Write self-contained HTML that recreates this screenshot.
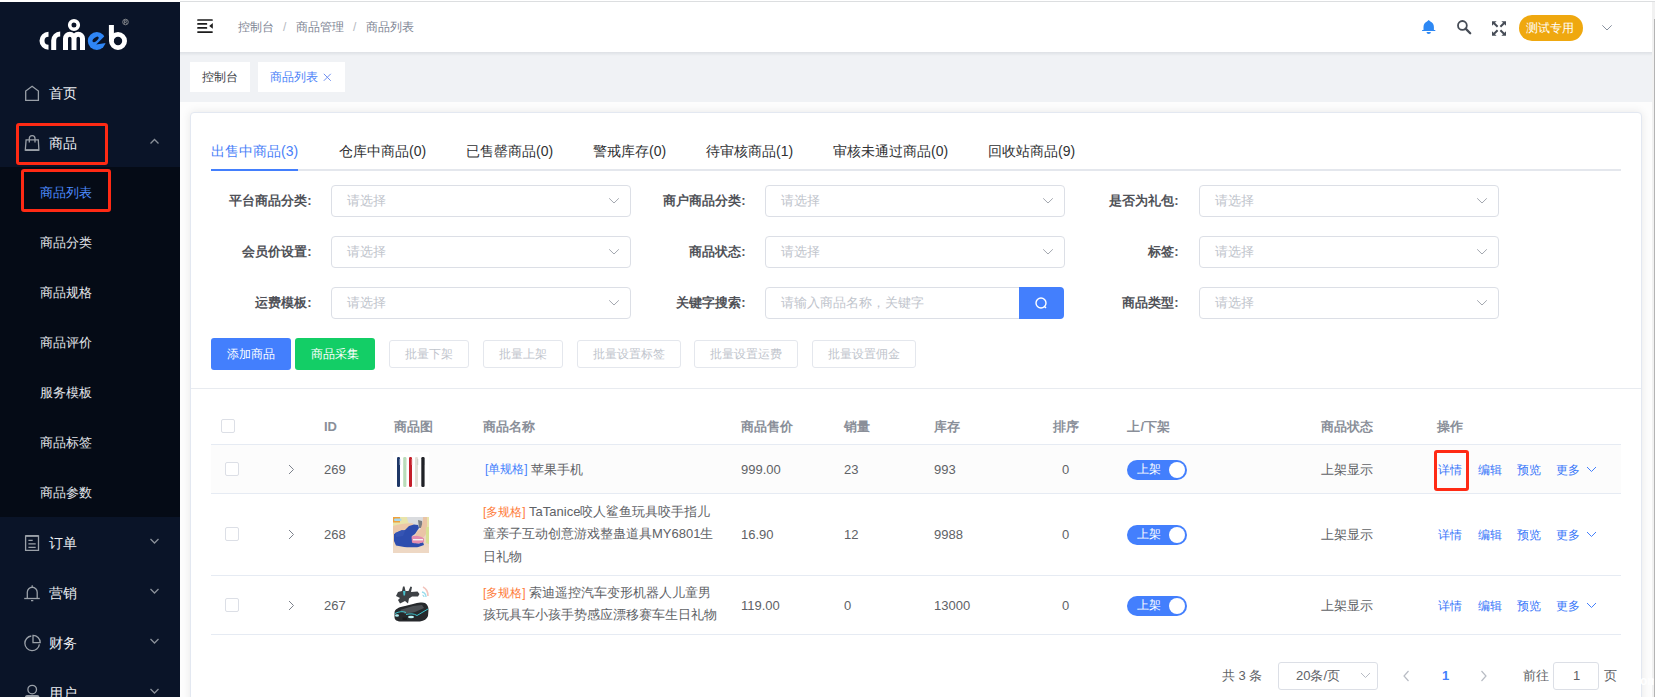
<!DOCTYPE html>
<html><head><meta charset="utf-8">
<style>
*{box-sizing:border-box;margin:0;padding:0}
html,body{width:1655px;height:697px;overflow:hidden}
body{position:relative;background:#fff;font-family:"Liberation Sans",sans-serif;font-size:13px;color:#606266}
.a{position:absolute}
.t{position:absolute;white-space:nowrap;line-height:1}
/* sidebar */
#side{left:0;top:2px;width:180px;height:695px;background:#0a1428}
#sub{left:0;top:167px;width:180px;height:350px;background:#050b16}
.mi{color:#eceef2;font-size:14px}
.si{color:#e2e5ea;font-size:13px}
.ic{position:absolute;fill:none;stroke:#9aa0a8;stroke-width:1.3}
.red{position:absolute;border:3px solid #ff2a14;border-radius:3px}
/* header */
#topline{left:180px;top:1px;width:1475px;height:1px;background:#dcdee0}
#hdr{left:180px;top:2px;width:1472px;height:50px;background:#fff}
#tagbar{left:180px;top:52px;width:1472px;height:50px;background:#f0f2f5}
#main{left:180px;top:102px;width:1472px;height:595px;background:#fdfdfd}
#scroll{left:1652px;top:2px;width:3px;height:695px;background:#f1f1f1}
#thumb{left:1654px;top:19px;width:1px;height:678px;background:#b4b4b4;z-index:2}
.tag{position:absolute;top:62px;height:30px;background:#fff}
.c{font-style:normal;display:inline-block;width:1em}
</style></head><body>
<div class="a" id="topline"></div>
<div class="a" id="side"></div>
<div class="a" id="sub"></div>
<div class="a" id="hdr"></div>
<div class="a" id="tagbar"></div>
<div class="a" id="main"></div>
<div class="a" style="left:180px;top:52px;width:1472px;height:4px;background:linear-gradient(rgba(0,21,41,.08),rgba(0,21,41,0))"></div>
<div class="a" id="scroll"></div>
<div class="a" id="thumb"></div>

<svg class="a" style="left:0;top:0" width="180" height="67" viewBox="0 0 180 67">
 <g fill="none" stroke="#fff" stroke-width="5">
  <path d="M48.5,34.25 A6.5,6.5 0 0 0 48.5,47.25"/>
  <path d="M53.7,50 V40.5 A6.5,6.5 0 0 1 60.2,34"/>
  <path d="M65.5,50 V38.5 A4.25,4.25 0 0 1 74,38.5 V50 M74,38.5 A4.25,4.25 0 0 1 82.5,38.5 V50"/>
  <circle cx="74" cy="25" r="4.3" stroke-width="3.6"/>
  <path d="M111.4,25 V41"/>
  <circle cx="118" cy="41" r="6.6" stroke-width="4.8"/>
 </g>
 <circle cx="96.8" cy="41" r="9" fill="#2f86f6"/>
 <ellipse cx="95.6" cy="39.4" rx="3.7" ry="1.7" transform="rotate(-40 95.6 39.4)" fill="#0a1428"/>
 <path d="M96.2,44.6 L105.2,35.6 L109,35.6 L109,42.6 Z" fill="#0a1428"/>
 <circle cx="125.5" cy="22" r="2.8" fill="none" stroke="#aaa" stroke-width="0.7"/>
 <path d="M124.5,23.8 V20.3 H126 A1,1 0 0 1 126,22.2 H124.5 M125.6,22.2 L126.8,23.8" fill="none" stroke="#aaa" stroke-width="0.6"/>
</svg>
<svg class="ic" style="left:0;top:0" width="180" height="697" viewBox="0 0 180 697">
 <path d="M25.7,100.3 V91 L32.1,86.3 L38.4,91 V100.3 Z"/>
 <path d="M29.3,142.5 V138.4 A2.85,2.85 0 0 1 35,138.4 V142.5"/>
 <path d="M26.1,139.9 H38.3 L38.9,150 H25.3 Z"/>
 <path d="M25.3,150.2 H38.9" stroke-width="1.6"/>
 <path d="M150.5,143.5 L154.5,139.5 L158.5,143.5" stroke="#8a9099"/>
 <path d="M25.6,535.8 H38.5 V550.3 H25.6 Z"/>
 <path d="M25.6,535.9 H38.5" stroke-width="1.8"/>
 <path d="M28.4,540.4 H32.7 M28.4,543.9 H35.7 M28.4,547.3 H35.7"/>
 <path d="M24.2,598.5 H39.8"/>
 <path d="M27.3,598.5 V592.2 A4.95,4.95 0 0 1 37.2,592.2 V598.5"/>
 <path d="M32.2,585.2 V587.3 M31,600.6 H33.3" stroke-width="1.2"/>
 <path d="M31.3,636 A7.3,7.3 0 1 0 39.4,644.3"/>
 <path d="M33,635.4 V642.6 H40.2 A7.2,7.2 0 0 0 33,635.4 Z"/>
 <circle cx="32.2" cy="689.6" r="4.3" stroke-width="1.3"/>
 <path d="M25,697 C25,694.5 28,695 32.2,695 C36.4,695 39.4,694.5 39.4,697 Z" fill="#9aa0a8" stroke="none"/>
 <path d="M150.5,539 L154.5,543 L158.5,539 M150.5,589 L154.5,593 L158.5,589 M150.5,639 L154.5,643 L158.5,639 M150.5,689 L154.5,693 L158.5,689" stroke="#8a9099"/>
</svg>
<div class="t mi" style="left:49px;top:86px"><i class="c">首</i><i class="c">页</i></div>
<div class="t mi" style="left:49px;top:136px"><i class="c">商</i><i class="c">品</i></div>
<div class="red" style="left:16px;top:123px;width:92px;height:42px"></div>
<div class="t si" style="left:40px;top:186px;color:#4d8bff"><i class="c">商</i><i class="c">品</i><i class="c">列</i><i class="c">表</i></div>
<div class="red" style="left:21px;top:169px;width:90px;height:43px"></div>
<div class="t si" style="left:40px;top:236px"><i class="c">商</i><i class="c">品</i><i class="c">分</i><i class="c">类</i></div>
<div class="t si" style="left:40px;top:286px"><i class="c">商</i><i class="c">品</i><i class="c">规</i><i class="c">格</i></div>
<div class="t si" style="left:40px;top:336px"><i class="c">商</i><i class="c">品</i><i class="c">评</i><i class="c">价</i></div>
<div class="t si" style="left:40px;top:386px"><i class="c">服</i><i class="c">务</i><i class="c">模</i><i class="c">板</i></div>
<div class="t si" style="left:40px;top:436px"><i class="c">商</i><i class="c">品</i><i class="c">标</i><i class="c">签</i></div>
<div class="t si" style="left:40px;top:486px"><i class="c">商</i><i class="c">品</i><i class="c">参</i><i class="c">数</i></div>
<div class="t mi" style="left:49px;top:536px"><i class="c">订</i><i class="c">单</i></div>
<div class="t mi" style="left:49px;top:586px"><i class="c">营</i><i class="c">销</i></div>
<div class="t mi" style="left:49px;top:636px"><i class="c">财</i><i class="c">务</i></div>
<div class="t mi" style="left:49px;top:686px"><i class="c">用</i><i class="c">户</i></div>


<svg class="a" style="left:0;top:0" width="1655" height="52" viewBox="0 0 1655 52">
 <g fill="#1c1c1c">
  <rect x="197.2" y="19.2" width="15.6" height="1.6" rx="0.6"/>
  <rect x="197.2" y="23.1" width="10" height="1.7" rx="0.6"/>
  <rect x="197.2" y="27.1" width="10" height="1.7" rx="0.6"/>
  <rect x="197.2" y="31.2" width="15.6" height="1.7" rx="0.6"/>
  <path d="M212.8,23.1 V28.8 L209.2,26 Z"/>
 </g>
 <path d="M1428.7,20 L1430.4,21.5 C1432.8,22.4 1433.9,24.6 1433.9,27 V30 H1435.3 V31.1 H1422.1 V30 H1423.5 V27 C1423.5,24.6 1424.6,22.4 1427,21.5 Z M1426.5,32 H1430.9 A2.2,1.9 0 0 1 1426.5,32 Z" fill="#2d88f4"/>
 <circle cx="1462.4" cy="25.4" r="4.4" fill="none" stroke="#464c56" stroke-width="1.8"/>
 <path d="M1465.6,28.6 L1470.2,33.2" stroke="#464c56" stroke-width="2.3" stroke-linecap="round"/>
 <g fill="#464c56" stroke="#464c56" stroke-width="2">
  <path d="M1492,21.2 L1496.6,21.2 L1492,25.8 Z" stroke="none"/>
  <path d="M1506,21.2 L1501.4,21.2 L1506,25.8 Z" stroke="none"/>
  <path d="M1492,35.8 L1496.6,35.8 L1492,31.2 Z" stroke="none"/>
  <path d="M1506,35.8 L1501.4,35.8 L1506,31.2 Z" stroke="none"/>
  <path d="M1493.8,23 L1497.6,26.8 M1504.2,23 L1500.4,26.8 M1493.8,34 L1497.6,30.2 M1504.2,34 L1500.4,30.2" fill="none"/>
 </g>
 <path d="M1602.3,25.3 L1607,30 L1611.7,25.3" fill="none" stroke="#7a8494" stroke-width="0.9"/>
</svg>
<div class="t" style="left:238px;top:21px;font-size:12px;color:#808695"><i class="c">控</i><i class="c">制</i><i class="c">台</i></div>
<div class="t" style="left:283px;top:21px;font-size:12px;color:#b4b8c0">/</div>
<div class="t" style="left:296px;top:21px;font-size:12px;color:#808695"><i class="c">商</i><i class="c">品</i><i class="c">管</i><i class="c">理</i></div>
<div class="t" style="left:353px;top:21px;font-size:12px;color:#b4b8c0">/</div>
<div class="t" style="left:366px;top:21px;font-size:12px;color:#808695"><i class="c">商</i><i class="c">品</i><i class="c">列</i><i class="c">表</i></div>
<div class="a" style="left:1519px;top:15px;width:64px;height:26px;border-radius:13px;background:#efa80f"></div>
<div class="t" style="left:1526px;top:22px;font-size:12px;color:#fff"><i class="c">测</i><i class="c">试</i><i class="c">专</i><i class="c">用</i></div>
<div class="tag" style="left:190px;width:60px"></div>
<div class="t" style="left:202px;top:71px;font-size:12px;color:#3a3d44"><i class="c">控</i><i class="c">制</i><i class="c">台</i></div>
<div class="tag" style="left:258px;width:87px"></div>
<div class="t" style="left:270px;top:71px;font-size:12px;color:#4a7ff8"><i class="c">商</i><i class="c">品</i><i class="c">列</i><i class="c">表</i></div>
<svg class="a" style="left:322px;top:73px" width="11" height="9" viewBox="0 0 11 9"><path d="M1.8,0.8 L8.8,7.8 M8.8,0.8 L1.8,7.8" stroke="#6f8ff0" stroke-width="1"/></svg>

<div class="a" style="left:190px;top:112px;width:1452px;height:620px;background:#fff;border:1px solid #e3e8f1;border-radius:4px;box-shadow:0 0 10px rgba(0,0,0,.09)"></div>
<div class="t" style="left:211px;top:144px;font-size:14px;color:#4a7ff8"><i class="c">出</i><i class="c">售</i><i class="c">中</i><i class="c">商</i><i class="c">品</i>(3)</div>
<div class="t" style="left:339px;top:144px;font-size:14px;color:#303133"><i class="c">仓</i><i class="c">库</i><i class="c">中</i><i class="c">商</i><i class="c">品</i>(0)</div>
<div class="t" style="left:466px;top:144px;font-size:14px;color:#303133"><i class="c">已</i><i class="c">售</i><i class="c">罄</i><i class="c">商</i><i class="c">品</i>(0)</div>
<div class="t" style="left:593px;top:144px;font-size:14px;color:#303133"><i class="c">警</i><i class="c">戒</i><i class="c">库</i><i class="c">存</i>(0)</div>
<div class="t" style="left:706px;top:144px;font-size:14px;color:#303133"><i class="c">待</i><i class="c">审</i><i class="c">核</i><i class="c">商</i><i class="c">品</i>(1)</div>
<div class="t" style="left:833px;top:144px;font-size:14px;color:#303133"><i class="c">审</i><i class="c">核</i><i class="c">未</i><i class="c">通</i><i class="c">过</i><i class="c">商</i><i class="c">品</i>(0)</div>
<div class="t" style="left:988px;top:144px;font-size:14px;color:#303133"><i class="c">回</i><i class="c">收</i><i class="c">站</i><i class="c">商</i><i class="c">品</i>(9)</div>
<div class="a" style="left:211px;top:169px;width:1410px;height:2px;background:#e4e7ed"></div>
<div class="a" style="left:211px;top:169px;width:87px;height:2px;background:#437ffd"></div>
<div class="t" style="right:1343.4px;top:194px;font-size:13px;font-weight:bold;color:#505258"><i class="c">平</i><i class="c">台</i><i class="c">商</i><i class="c">品</i><i class="c">分</i><i class="c">类</i>:</div>
<div class="a" style="left:331px;top:185px;width:300px;height:32px;border:1px solid #dcdfe6;border-radius:4px"></div>
<div class="t" style="left:347px;top:194px;font-size:13px;color:#c0c4cc"><i class="c">请</i><i class="c">选</i><i class="c">择</i></div>
<svg class="a" style="left:608px;top:197px" width="12" height="8" viewBox="0 0 12 8"><path d="M1.2,1.3 L6,6 L10.8,1.3" fill="none" stroke="#a4a8b0" stroke-width="1"/></svg>
<div class="t" style="right:909.5px;top:194px;font-size:13px;font-weight:bold;color:#505258"><i class="c">商</i><i class="c">户</i><i class="c">商</i><i class="c">品</i><i class="c">分</i><i class="c">类</i>:</div>
<div class="a" style="left:765px;top:185px;width:300px;height:32px;border:1px solid #dcdfe6;border-radius:4px"></div>
<div class="t" style="left:781px;top:194px;font-size:13px;color:#c0c4cc"><i class="c">请</i><i class="c">选</i><i class="c">择</i></div>
<svg class="a" style="left:1042px;top:197px" width="12" height="8" viewBox="0 0 12 8"><path d="M1.2,1.3 L6,6 L10.8,1.3" fill="none" stroke="#a4a8b0" stroke-width="1"/></svg>
<div class="t" style="right:476.29999999999995px;top:194px;font-size:13px;font-weight:bold;color:#505258"><i class="c">是</i><i class="c">否</i><i class="c">为</i><i class="c">礼</i><i class="c">包</i>:</div>
<div class="a" style="left:1199px;top:185px;width:300px;height:32px;border:1px solid #dcdfe6;border-radius:4px"></div>
<div class="t" style="left:1215px;top:194px;font-size:13px;color:#c0c4cc"><i class="c">请</i><i class="c">选</i><i class="c">择</i></div>
<svg class="a" style="left:1476px;top:197px" width="12" height="8" viewBox="0 0 12 8"><path d="M1.2,1.3 L6,6 L10.8,1.3" fill="none" stroke="#a4a8b0" stroke-width="1"/></svg>
<div class="t" style="right:1343.4px;top:245px;font-size:13px;font-weight:bold;color:#505258"><i class="c">会</i><i class="c">员</i><i class="c">价</i><i class="c">设</i><i class="c">置</i>:</div>
<div class="a" style="left:331px;top:236px;width:300px;height:32px;border:1px solid #dcdfe6;border-radius:4px"></div>
<div class="t" style="left:347px;top:245px;font-size:13px;color:#c0c4cc"><i class="c">请</i><i class="c">选</i><i class="c">择</i></div>
<svg class="a" style="left:608px;top:248px" width="12" height="8" viewBox="0 0 12 8"><path d="M1.2,1.3 L6,6 L10.8,1.3" fill="none" stroke="#a4a8b0" stroke-width="1"/></svg>
<div class="t" style="right:909.5px;top:245px;font-size:13px;font-weight:bold;color:#505258"><i class="c">商</i><i class="c">品</i><i class="c">状</i><i class="c">态</i>:</div>
<div class="a" style="left:765px;top:236px;width:300px;height:32px;border:1px solid #dcdfe6;border-radius:4px"></div>
<div class="t" style="left:781px;top:245px;font-size:13px;color:#c0c4cc"><i class="c">请</i><i class="c">选</i><i class="c">择</i></div>
<svg class="a" style="left:1042px;top:248px" width="12" height="8" viewBox="0 0 12 8"><path d="M1.2,1.3 L6,6 L10.8,1.3" fill="none" stroke="#a4a8b0" stroke-width="1"/></svg>
<div class="t" style="right:476.29999999999995px;top:245px;font-size:13px;font-weight:bold;color:#505258"><i class="c">标</i><i class="c">签</i>:</div>
<div class="a" style="left:1199px;top:236px;width:300px;height:32px;border:1px solid #dcdfe6;border-radius:4px"></div>
<div class="t" style="left:1215px;top:245px;font-size:13px;color:#c0c4cc"><i class="c">请</i><i class="c">选</i><i class="c">择</i></div>
<svg class="a" style="left:1476px;top:248px" width="12" height="8" viewBox="0 0 12 8"><path d="M1.2,1.3 L6,6 L10.8,1.3" fill="none" stroke="#a4a8b0" stroke-width="1"/></svg>
<div class="t" style="right:1343.4px;top:296px;font-size:13px;font-weight:bold;color:#505258"><i class="c">运</i><i class="c">费</i><i class="c">模</i><i class="c">板</i>:</div>
<div class="a" style="left:331px;top:287px;width:300px;height:32px;border:1px solid #dcdfe6;border-radius:4px"></div>
<div class="t" style="left:347px;top:296px;font-size:13px;color:#c0c4cc"><i class="c">请</i><i class="c">选</i><i class="c">择</i></div>
<svg class="a" style="left:608px;top:299px" width="12" height="8" viewBox="0 0 12 8"><path d="M1.2,1.3 L6,6 L10.8,1.3" fill="none" stroke="#a4a8b0" stroke-width="1"/></svg>
<div class="t" style="right:909.5px;top:296px;font-size:13px;font-weight:bold;color:#505258"><i class="c">关</i><i class="c">键</i><i class="c">字</i><i class="c">搜</i><i class="c">索</i>:</div>
<div class="a" style="left:765px;top:287px;width:260px;height:32px;border:1px solid #dcdfe6;border-radius:4px 0 0 4px"></div>
<div class="t" style="left:781px;top:296px;font-size:13px;color:#c0c4cc"><i class="c">请</i><i class="c">输</i><i class="c">入</i><i class="c">商</i><i class="c">品</i><i class="c">名</i><i class="c">称</i><i class="c">，</i><i class="c">关</i><i class="c">键</i><i class="c">字</i></div>
<div class="a" style="left:1019px;top:287px;width:45px;height:32px;background:#437ffd;border-radius:0 4px 4px 0"></div>
<svg class="a" style="left:1033px;top:295px" width="16" height="16" viewBox="0 0 16 16"><circle cx="8" cy="8" r="5" fill="none" stroke="#fff" stroke-width="1.4"/><path d="M11.3,11.3 L13,13" stroke="#fff" stroke-width="1.4"/></svg>
<div class="t" style="right:476.29999999999995px;top:296px;font-size:13px;font-weight:bold;color:#505258"><i class="c">商</i><i class="c">品</i><i class="c">类</i><i class="c">型</i>:</div>
<div class="a" style="left:1199px;top:287px;width:300px;height:32px;border:1px solid #dcdfe6;border-radius:4px"></div>
<div class="t" style="left:1215px;top:296px;font-size:13px;color:#c0c4cc"><i class="c">请</i><i class="c">选</i><i class="c">择</i></div>
<svg class="a" style="left:1476px;top:299px" width="12" height="8" viewBox="0 0 12 8"><path d="M1.2,1.3 L6,6 L10.8,1.3" fill="none" stroke="#a4a8b0" stroke-width="1"/></svg>
<div class="a" style="left:211px;top:338px;width:80px;height:32px;background:#437ffd;border-radius:3px;color:#fff;font-size:12px;line-height:32px;text-align:center"><i class="c">添</i><i class="c">加</i><i class="c">商</i><i class="c">品</i></div>
<div class="a" style="left:295px;top:338px;width:80px;height:32px;background:#13ce66;border-radius:3px;color:#fff;font-size:12px;line-height:32px;text-align:center"><i class="c">商</i><i class="c">品</i><i class="c">采</i><i class="c">集</i></div>
<div class="a" style="left:389px;top:340px;width:80px;height:28px;border:1px solid #e4e7ed;border-radius:3px;color:#c0c4cc;font-size:12px;line-height:26px;text-align:center"><i class="c">批</i><i class="c">量</i><i class="c">下</i><i class="c">架</i></div>
<div class="a" style="left:483px;top:340px;width:80px;height:28px;border:1px solid #e4e7ed;border-radius:3px;color:#c0c4cc;font-size:12px;line-height:26px;text-align:center"><i class="c">批</i><i class="c">量</i><i class="c">上</i><i class="c">架</i></div>
<div class="a" style="left:577px;top:340px;width:104px;height:28px;border:1px solid #e4e7ed;border-radius:3px;color:#c0c4cc;font-size:12px;line-height:26px;text-align:center"><i class="c">批</i><i class="c">量</i><i class="c">设</i><i class="c">置</i><i class="c">标</i><i class="c">签</i></div>
<div class="a" style="left:694px;top:340px;width:104px;height:28px;border:1px solid #e4e7ed;border-radius:3px;color:#c0c4cc;font-size:12px;line-height:26px;text-align:center"><i class="c">批</i><i class="c">量</i><i class="c">设</i><i class="c">置</i><i class="c">运</i><i class="c">费</i></div>
<div class="a" style="left:812px;top:340px;width:104px;height:28px;border:1px solid #e4e7ed;border-radius:3px;color:#c0c4cc;font-size:12px;line-height:26px;text-align:center"><i class="c">批</i><i class="c">量</i><i class="c">设</i><i class="c">置</i><i class="c">佣</i><i class="c">金</i></div>
<div class="a" style="left:191px;top:388px;width:1450px;height:1px;background:#e8ebf0"></div>
<div class="a" style="left:221px;top:419px;width:14px;height:14px;border:1px solid #dcdfe6;border-radius:2px;background:#fff"></div>
<div class="t" style="left:324px;top:420px;font-size:13px;font-weight:bold;color:#8a8f99">ID</div>
<div class="t" style="left:393.5px;top:420px;font-size:13px;font-weight:bold;color:#8a8f99"><i class="c">商</i><i class="c">品</i><i class="c">图</i></div>
<div class="t" style="left:483px;top:420px;font-size:13px;font-weight:bold;color:#8a8f99"><i class="c">商</i><i class="c">品</i><i class="c">名</i><i class="c">称</i></div>
<div class="t" style="left:741px;top:420px;font-size:13px;font-weight:bold;color:#8a8f99"><i class="c">商</i><i class="c">品</i><i class="c">售</i><i class="c">价</i></div>
<div class="t" style="left:844px;top:420px;font-size:13px;font-weight:bold;color:#8a8f99"><i class="c">销</i><i class="c">量</i></div>
<div class="t" style="left:934px;top:420px;font-size:13px;font-weight:bold;color:#8a8f99"><i class="c">库</i><i class="c">存</i></div>
<div class="t" style="left:1052.7px;top:420px;font-size:13px;font-weight:bold;color:#8a8f99"><i class="c">排</i><i class="c">序</i></div>
<div class="t" style="left:1127.4px;top:420px;font-size:13px;font-weight:bold;color:#8a8f99"><i class="c">上</i>/<i class="c">下</i><i class="c">架</i></div>
<div class="t" style="left:1321px;top:420px;font-size:13px;font-weight:bold;color:#8a8f99"><i class="c">商</i><i class="c">品</i><i class="c">状</i><i class="c">态</i></div>
<div class="t" style="left:1437px;top:420px;font-size:13px;font-weight:bold;color:#8a8f99"><i class="c">操</i><i class="c">作</i></div>
<div class="a" style="left:211px;top:444px;width:1410px;height:1px;background:#e6ebf3"></div>
<div class="a" style="left:211px;top:445px;width:1410px;height:48px;background:#fcfcfc"></div>
<div class="a" style="left:211px;top:493px;width:1410px;height:1px;background:#e6ebf3"></div>
<div class="a" style="left:211px;top:575px;width:1410px;height:1px;background:#e6ebf3"></div>
<div class="a" style="left:211px;top:634px;width:1410px;height:1px;background:#e6ebf3"></div>
<div class="a" style="left:225px;top:462px;width:14px;height:14px;border:1px solid #dcdfe6;border-radius:2px;background:#fff"></div>
<svg class="a" style="left:286px;top:464px" width="10" height="11" viewBox="0 0 10 11"><path d="M3,1 L7.5,5.5 L3,10" fill="none" stroke="#7d828c" stroke-width="1"/></svg>
<div class="t" style="left:324px;top:463px;font-size:13px;color:#606266">269</div>
<div class="t" style="left:741px;top:463px;font-size:13px;color:#606266">999.00</div>
<div class="t" style="left:844px;top:463px;font-size:13px;color:#606266">23</div>
<div class="t" style="left:934px;top:463px;font-size:13px;color:#606266">993</div>
<div class="t" style="left:1062px;top:463px;font-size:13px;color:#606266">0</div>
<div class="a" style="left:1127px;top:460px;width:60px;height:20px;border-radius:10px;background:#437ffd"></div>
<div class="a" style="left:1169px;top:462px;width:16px;height:16px;border-radius:8px;background:#fff"></div>
<div class="t" style="left:1137px;top:463px;font-size:12px;color:#fff"><i class="c">上</i><i class="c">架</i></div>
<div class="t" style="left:1321px;top:463px;font-size:13px;color:#606266"><i class="c">上</i><i class="c">架</i><i class="c">显</i><i class="c">示</i></div>
<div class="t" style="left:1438px;top:464px;font-size:12px;color:#3776f9"><i class="c">详</i><i class="c">情</i></div>
<div class="t" style="left:1477.5px;top:464px;font-size:12px;color:#3776f9"><i class="c">编</i><i class="c">辑</i></div>
<div class="t" style="left:1517px;top:464px;font-size:12px;color:#3776f9"><i class="c">预</i><i class="c">览</i></div>
<div class="t" style="left:1556px;top:464px;font-size:12px;color:#3776f9"><i class="c">更</i><i class="c">多</i></div>
<svg class="a" style="left:1586px;top:466px" width="11" height="7" viewBox="0 0 11 7"><path d="M1,1 L5.5,5.5 L10,1" fill="none" stroke="#437ffd" stroke-width="1"/></svg>
<div class="a" style="left:225px;top:527px;width:14px;height:14px;border:1px solid #dcdfe6;border-radius:2px;background:#fff"></div>
<svg class="a" style="left:286px;top:529px" width="10" height="11" viewBox="0 0 10 11"><path d="M3,1 L7.5,5.5 L3,10" fill="none" stroke="#7d828c" stroke-width="1"/></svg>
<div class="t" style="left:324px;top:528px;font-size:13px;color:#606266">268</div>
<div class="t" style="left:741px;top:528px;font-size:13px;color:#606266">16.90</div>
<div class="t" style="left:844px;top:528px;font-size:13px;color:#606266">12</div>
<div class="t" style="left:934px;top:528px;font-size:13px;color:#606266">9988</div>
<div class="t" style="left:1062px;top:528px;font-size:13px;color:#606266">0</div>
<div class="a" style="left:1127px;top:525px;width:60px;height:20px;border-radius:10px;background:#437ffd"></div>
<div class="a" style="left:1169px;top:527px;width:16px;height:16px;border-radius:8px;background:#fff"></div>
<div class="t" style="left:1137px;top:528px;font-size:12px;color:#fff"><i class="c">上</i><i class="c">架</i></div>
<div class="t" style="left:1321px;top:528px;font-size:13px;color:#606266"><i class="c">上</i><i class="c">架</i><i class="c">显</i><i class="c">示</i></div>
<div class="t" style="left:1438px;top:529px;font-size:12px;color:#3776f9"><i class="c">详</i><i class="c">情</i></div>
<div class="t" style="left:1477.5px;top:529px;font-size:12px;color:#3776f9"><i class="c">编</i><i class="c">辑</i></div>
<div class="t" style="left:1517px;top:529px;font-size:12px;color:#3776f9"><i class="c">预</i><i class="c">览</i></div>
<div class="t" style="left:1556px;top:529px;font-size:12px;color:#3776f9"><i class="c">更</i><i class="c">多</i></div>
<svg class="a" style="left:1586px;top:531px" width="11" height="7" viewBox="0 0 11 7"><path d="M1,1 L5.5,5.5 L10,1" fill="none" stroke="#437ffd" stroke-width="1"/></svg>
<div class="a" style="left:225px;top:598px;width:14px;height:14px;border:1px solid #dcdfe6;border-radius:2px;background:#fff"></div>
<svg class="a" style="left:286px;top:600px" width="10" height="11" viewBox="0 0 10 11"><path d="M3,1 L7.5,5.5 L3,10" fill="none" stroke="#7d828c" stroke-width="1"/></svg>
<div class="t" style="left:324px;top:599px;font-size:13px;color:#606266">267</div>
<div class="t" style="left:741px;top:599px;font-size:13px;color:#606266">119.00</div>
<div class="t" style="left:844px;top:599px;font-size:13px;color:#606266">0</div>
<div class="t" style="left:934px;top:599px;font-size:13px;color:#606266">13000</div>
<div class="t" style="left:1062px;top:599px;font-size:13px;color:#606266">0</div>
<div class="a" style="left:1127px;top:596px;width:60px;height:20px;border-radius:10px;background:#437ffd"></div>
<div class="a" style="left:1169px;top:598px;width:16px;height:16px;border-radius:8px;background:#fff"></div>
<div class="t" style="left:1137px;top:599px;font-size:12px;color:#fff"><i class="c">上</i><i class="c">架</i></div>
<div class="t" style="left:1321px;top:599px;font-size:13px;color:#606266"><i class="c">上</i><i class="c">架</i><i class="c">显</i><i class="c">示</i></div>
<div class="t" style="left:1438px;top:600px;font-size:12px;color:#3776f9"><i class="c">详</i><i class="c">情</i></div>
<div class="t" style="left:1477.5px;top:600px;font-size:12px;color:#3776f9"><i class="c">编</i><i class="c">辑</i></div>
<div class="t" style="left:1517px;top:600px;font-size:12px;color:#3776f9"><i class="c">预</i><i class="c">览</i></div>
<div class="t" style="left:1556px;top:600px;font-size:12px;color:#3776f9"><i class="c">更</i><i class="c">多</i></div>
<svg class="a" style="left:1586px;top:602px" width="11" height="7" viewBox="0 0 11 7"><path d="M1,1 L5.5,5.5 L10,1" fill="none" stroke="#437ffd" stroke-width="1"/></svg>
<div class="t" style="left:485px;top:463px;font-size:12px;color:#437ffd">[<i class="c">单</i><i class="c">规</i><i class="c">格</i>]</div>
<div class="t" style="left:531px;top:463px;font-size:13px;color:#606266"><i class="c">苹</i><i class="c">果</i><i class="c">手</i><i class="c">机</i></div>
<div class="a" style="left:483px;top:500.5px;width:260px;white-space:nowrap;font-size:13px;line-height:22.6px;color:#606266"><span style="color:#fe7b3a;font-size:12px">[<i class="c">多</i><i class="c">规</i><i class="c">格</i>]</span> TaTanice<i class="c">咬</i><i class="c">人</i><i class="c">鲨</i><i class="c">鱼</i><i class="c">玩</i><i class="c">具</i><i class="c">咬</i><i class="c">手</i><i class="c">指</i><i class="c">儿</i><br><i class="c">童</i><i class="c">亲</i><i class="c">子</i><i class="c">互</i><i class="c">动</i><i class="c">创</i><i class="c">意</i><i class="c">游</i><i class="c">戏</i><i class="c">整</i><i class="c">蛊</i><i class="c">道</i><i class="c">具</i>MY6801<i class="c">生</i><br><i class="c">日</i><i class="c">礼</i><i class="c">物</i></div>
<div class="a" style="left:483px;top:581.5px;width:260px;white-space:nowrap;font-size:13px;line-height:22.6px;color:#606266"><span style="color:#fe7b3a;font-size:12px">[<i class="c">多</i><i class="c">规</i><i class="c">格</i>]</span> <i class="c">索</i><i class="c">迪</i><i class="c">遥</i><i class="c">控</i><i class="c">汽</i><i class="c">车</i><i class="c">变</i><i class="c">形</i><i class="c">机</i><i class="c">器</i><i class="c">人</i><i class="c">儿</i><i class="c">童</i><i class="c">男</i><br><i class="c">孩</i><i class="c">玩</i><i class="c">具</i><i class="c">车</i><i class="c">小</i><i class="c">孩</i><i class="c">手</i><i class="c">势</i><i class="c">感</i><i class="c">应</i><i class="c">漂</i><i class="c">移</i><i class="c">赛</i><i class="c">车</i><i class="c">生</i><i class="c">日</i><i class="c">礼</i><i class="c">物</i></div>
<div class="red" style="left:1434px;top:450px;width:35px;height:41px"></div>
<svg class="a" style="left:393px;top:452px" width="36" height="36" viewBox="0 0 36 36">
<rect width="36" height="36" fill="#fff"/>
<rect x="4" y="5" width="3" height="30" rx="1.2" fill="#1e3766"/>
<rect x="10.2" y="5" width="3.2" height="30" rx="1.2" fill="#b9dcb9"/>
<rect x="16" y="5" width="3" height="30" rx="1.2" fill="#c41f2a"/>
<rect x="22" y="5" width="3" height="30" rx="1.2" fill="#e2e0d6"/>
<rect x="28.3" y="5" width="3.3" height="30" rx="1.2" fill="#202227"/>
<rect x="6.4" y="7" width="0.8" height="6" fill="#8fa3c4"/>
<rect x="12.8" y="7" width="0.8" height="6" fill="#d8ead8"/>
<rect x="18.4" y="7" width="0.8" height="6" fill="#e2777c"/>
<rect x="24.4" y="7" width="0.8" height="6" fill="#c8c6c0"/>
<rect x="31" y="7" width="0.8" height="6" fill="#6a6c70"/>
</svg>
<svg class="a" style="left:393px;top:517px" width="36" height="36" viewBox="0 0 36 36">
<rect width="36" height="36" fill="#ecd6c0"/>
<rect width="36" height="12" fill="#e9e4aa"/>
<rect x="0" y="0" width="7" height="5.5" fill="#eea23c"/>
<rect x="1" y="1.5" width="7.5" height="2.6" rx="1.3" fill="#a8d8ee"/>
<path d="M14,0 H34 V12 L28,13 L20,9 L15,5 Z" fill="#dadcdf"/>
<path d="M25,3 L29,4 L30,11 L26,11 Z" fill="#7a7e84"/>
<path d="M0,9 C7,7 15,6 20,6.5 L22,12 C14,13 6,15 0,17 Z" fill="#ecc8a8"/>
<path d="M30,0 H34 V12 C34,16 32,20 29,21 L23,20 C22,17 24,14 27,13 C29,9 30,4 30,0 Z" fill="#eac4a6"/>
<path d="M33,10 H36 V27 L33,26 Z" fill="#d8e094"/>
<path d="M1,17 L7,14 L12,13 L16,9 L21,7.5 L25,8 L26,11 L22,17 L19,19 L19,25 L26,26.5 L30,25 L31,28 L24,30.5 L14,30.5 L3,28.5 L1,24 Z" fill="#2d4dae"/>
<path d="M2,16 L9,13 L12,14 L10,19 L3,20 Z" fill="#3554b4"/>
<path d="M18.5,19.5 C22,18 28,19 31,21.5 L31,25 C28,26.5 22,27 19,25.5 Z" fill="#e48cae"/>
<rect x="20" y="22" width="10" height="1.4" fill="#f6f0f0"/>
<rect x="0" y="30.5" width="36" height="5.5" fill="#eed8c4"/>
</svg>
<svg class="a" style="left:393px;top:586px" width="36" height="36" viewBox="0 0 36 36">
<rect width="36" height="36" fill="#fff"/>
<path d="M10,0.5 L11.5,0.5 L12.5,5 L15.5,5 L17.5,0.5 L19,1 L18,6 L24.5,5.5 L26.5,8 L25,10.5 L19,10.5 L16,12.5 L15,17.5 L12,15 L7,17.5 L5,14 L7,12 L3,10 L5,6 L9,5 Z" fill="#3d4145"/>
<path d="M10,5 L12.5,5 L12,9.5 L10.5,9.5 Z" fill="#48c0cc"/>
<path d="M30,1 C33,2.5 35,6 35,10" fill="none" stroke="#f2c4bc" stroke-width="1.6"/>
<path d="M29,6 C31,6.5 33,8.5 33,11 M29.5,9 C30.5,9.3 31,10 31,11" fill="none" stroke="#98dcec" stroke-width="1.3"/>
<path d="M1.5,27 C1.5,23 6,21 12,20 L22,17.5 C26,16.5 30,16 32,17 C34.5,18.5 35.5,21 35.5,24 L35,30 C34,33 31,35 27,35.5 L8,35.5 C4,35.5 1.5,34 1.5,31 Z" fill="#26292c"/>
<path d="M7,24 L20,20 L29,19 L31,22 L22,26 L12,28 Z" fill="#4c5054"/>
<path d="M2,27.5 C6,25.5 10,25 13,26.5 M13,28.5 C17,27.5 21,27.5 24,29.5 L35,23" fill="none" stroke="#3cc6d0" stroke-width="1"/>
<ellipse cx="4" cy="29.5" rx="2" ry="1.2" fill="#aeeef2"/>
<ellipse cx="18" cy="31" rx="3" ry="1.3" fill="#bff4f6"/>
<rect x="9.5" y="31.5" width="4.5" height="2.5" fill="#1a1c1e"/>
</svg>
<div class="t" style="left:1222px;top:669px;font-size:13px;color:#606266"><i class="c">共</i> 3 <i class="c">条</i></div>
<div class="a" style="left:1278px;top:662px;width:100px;height:28px;border:1px solid #dcdfe6;border-radius:3px"></div>
<div class="t" style="left:1296px;top:669px;font-size:13px;color:#606266">20<i class="c">条</i>/<i class="c">页</i></div>
<svg class="a" style="left:1360px;top:672px" width="11" height="7" viewBox="0 0 11 7"><path d="M1,1 L5.5,5.5 L10,1" fill="none" stroke="#b8bcc4" stroke-width="1"/></svg>
<svg class="a" style="left:1401px;top:670px" width="10" height="12" viewBox="0 0 10 12"><path d="M7.5,1 L3,6 L7.5,11" fill="none" stroke="#b8bcc4" stroke-width="1.2"/></svg>
<div class="t" style="left:1442px;top:669px;font-size:13px;font-weight:bold;color:#437ffd">1</div>
<svg class="a" style="left:1479px;top:670px" width="10" height="12" viewBox="0 0 10 12"><path d="M2.5,1 L7,6 L2.5,11" fill="none" stroke="#b8bcc4" stroke-width="1.2"/></svg>
<div class="t" style="left:1523px;top:669px;font-size:13px;color:#606266"><i class="c">前</i><i class="c">往</i></div>
<div class="a" style="left:1553px;top:662px;width:46px;height:28px;border:1px solid #dcdfe6;border-radius:3px"></div>
<div class="t" style="left:1573px;top:669px;font-size:13px;color:#606266">1</div>
<div class="t" style="left:1604px;top:669px;font-size:13px;color:#606266"><i class="c">页</i></div>
<div class="t" style="left:1640px;top:675px;font-size:12px;font-weight:bold;color:#fff">om</div>
</body></html>
